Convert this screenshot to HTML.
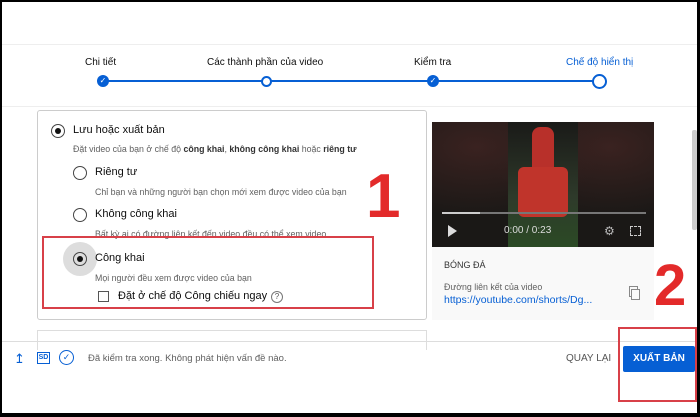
<!DOCTYPE html>
<html><head><meta charset="utf-8"><style>
*{margin:0;padding:0;box-sizing:border-box}
body{width:700px;height:417px;background:#000;position:relative;overflow:hidden;font-family:"Liberation Sans",sans-serif;color:#0d0d0d}
.pg{position:absolute;left:2px;top:2px;width:695px;height:411px;background:#fff}
.a{position:absolute}
.t{font-size:10.5px;white-space:nowrap}
.s{font-size:8.8px;color:#606060;white-space:nowrap}
.r{position:absolute;width:14px;height:14px;border:1.6px solid #444;border-radius:50%}
.r.on::after{content:"";position:absolute;left:2.5px;top:2.5px;width:6px;height:6px;border-radius:50%;background:#111}
.dot{position:absolute;width:12px;height:12px;border-radius:50%;background:#065fd4;color:#fff;font-size:8px;text-align:center;line-height:12px}
.ring{position:absolute;border:2.5px solid #065fd4;border-radius:50%;background:#fff}
</style></head><body><div class="pg">
<div class="a" style="left:0;top:42px;width:695px;height:1px;background:#eee"></div>
<div class="a" style="left:0;top:104px;width:695px;height:1px;background:#eee"></div>
<div class="a t" style="left:83px;top:55px;font-size:10px">Chi tiết</div>
<div class="a t" style="left:205px;top:55px;font-size:10px">Các thành phần của video</div>
<div class="a t" style="left:412px;top:55px;font-size:10px">Kiểm tra</div>
<div class="a t" style="left:564px;top:55px;font-size:10px;color:#065fd4">Chế độ hiển thị</div>
<div class="a" style="left:102px;top:78px;width:496px;height:2px;background:#065fd4"></div>
<div class="dot" style="left:95px;top:73px">✓</div>
<div class="ring" style="left:259px;top:74px;width:11px;height:11px"></div>
<div class="dot" style="left:425px;top:73px">✓</div>
<div class="ring" style="left:590px;top:72px;width:15px;height:15px"></div>

<div class="a" style="left:35px;top:108px;width:390px;height:210px;border:1px solid #ccc;border-radius:3px"></div>
<div class="r on" style="left:49px;top:122px"></div>
<div class="a t" style="left:71px;top:122px;font-size:11px">Lưu hoặc xuất bản</div>
<div class="a s" style="left:71px;top:142px">Đặt video của bạn ở chế độ <b style="color:#333">công khai</b>, <b style="color:#333">không công khai</b> hoặc <b style="color:#333">riêng tư</b></div>
<div class="r" style="left:71px;top:164px"></div>
<div class="a t" style="left:93px;top:164px;font-size:11px">Riêng tư</div>
<div class="a s" style="left:93px;top:185px">Chỉ bạn và những người bạn chọn mới xem được video của bạn</div>
<div class="r" style="left:71px;top:206px"></div>
<div class="a t" style="left:93px;top:206px;font-size:11px">Không công khai</div>
<div class="a s" style="left:93px;top:227px">Bất kỳ ai có đường liên kết đến video đều có thể xem video</div>
<div class="a" style="left:61px;top:240px;width:34px;height:34px;border-radius:50%;background:#ddd"></div>
<div class="r on" style="left:71px;top:250px"></div>
<div class="a t" style="left:93px;top:250px;font-size:11px">Công khai</div>
<div class="a s" style="left:93px;top:271px">Mọi người đều xem được video của bạn</div>
<div class="a" style="left:96px;top:289px;width:11px;height:11px;border:1.5px solid #555"></div>
<div class="a t" style="left:116px;top:288px;font-size:11px">Đặt ở chế độ Công chiếu ngay</div>
<div class="a" style="left:269px;top:289px;width:12px;height:12px;border:1px solid #777;border-radius:50%;font-size:8px;text-align:center;line-height:10px;color:#555">?</div>
<div class="a" style="left:40px;top:234px;width:332px;height:73px;border:2px solid #d84048"></div>
<div class="a" style="left:364px;top:164px;font-size:62px;font-weight:bold;color:#e32a2a;line-height:62px">1</div>
<div class="a" style="left:35px;top:328px;width:390px;height:20px;border:1px solid #ddd;border-bottom:none"></div>

<div class="a" style="left:430px;top:120px;width:222px;height:125px;background:#1a1816;overflow:hidden">
<div class="a" style="left:0;top:0;width:222px;height:125px;background:radial-gradient(ellipse at 20% 20%,#3a2220,transparent 50%),radial-gradient(ellipse at 80% 20%,#3a2220,transparent 50%)"></div>
<div class="a" style="left:76px;top:0;width:70px;height:125px;background:linear-gradient(#1a1a18,#2e3a2a 60%,#2b4a25)"></div>
<div class="a" style="left:100px;top:5px;width:22px;height:50px;background:#b8302a;border-radius:8px"></div>
<div class="a" style="left:86px;top:45px;width:50px;height:50px;background:#c0342b;border-radius:6px"></div>
<div class="a" style="left:10px;top:90px;width:204px;height:2px;background:#777"></div>
<div class="a" style="left:10px;top:90px;width:38px;height:2px;background:#ccc"></div>
<div class="a" style="left:16px;top:103px;width:0;height:0;border-left:9px solid #ddd;border-top:6px solid transparent;border-bottom:6px solid transparent"></div>
<div class="a" style="left:72px;top:103px;color:#ddd;font-size:10px">0:00 / 0:23</div>
<div class="a" style="left:172px;top:102px;color:#bbb;font-size:12px">⚙</div>
<div class="a" style="left:198px;top:104px;width:11px;height:10px;border:1.5px dashed #ccc"></div>
</div>
<div class="a" style="left:430px;top:245px;width:222px;height:73px;background:#f9f9f9"></div>
<div class="a" style="left:442px;top:258px;font-size:9px;color:#333">BÓNG ĐÁ</div>
<div class="a s" style="left:442px;top:280px">Đường liên kết của video</div>
<div class="a" style="left:442px;top:292px;font-size:10.5px;color:#065fd4">https://youtube.com/shorts/Dg...</div>
<div class="a" style="left:627px;top:284px;width:9px;height:11px;border:1.3px solid #888"></div>
<div class="a" style="left:629px;top:287px;width:9px;height:11px;border:1.3px solid #888;background:#f9f9f9"></div>
<div class="a" style="left:652px;top:255px;font-size:58px;font-weight:bold;color:#e32a2a;line-height:58px">2</div>
<div class="a" style="left:690px;top:128px;width:5px;height:100px;background:#ccc;border-radius:2px"></div>

<div class="a" style="left:0;top:339px;width:695px;height:1px;background:#ddd"></div>
<div class="a" style="left:12px;top:349px;font-size:13px;color:#065fd4">↥</div>
<div class="a" style="left:35px;top:350px;width:13px;height:12px;border:1.3px solid #065fd4;font-size:7px;font-weight:bold;color:#065fd4;text-align:center;line-height:10px">SD</div>
<div class="a" style="left:57px;top:348px;width:15px;height:15px;border:1.3px solid #065fd4;border-radius:50%;font-size:9px;color:#065fd4;text-align:center;line-height:13px">✓</div>
<div class="a s" style="left:86px;top:351px;font-size:9.5px">Đã kiểm tra xong. Không phát hiện vấn đề nào.</div>
<div class="a" style="left:564px;top:351px;font-size:10px;color:#555">QUAY LẠI</div>
<div class="a" style="left:621px;top:344px;width:72px;height:26px;background:#065fd4;color:#fff;font-size:10px;font-weight:bold;text-align:center;line-height:26px;border-radius:2px">XUẤT BẢN</div>
<div class="a" style="left:616px;top:325px;width:79px;height:75px;border:2px solid #d84048"></div>
</div></body></html>
